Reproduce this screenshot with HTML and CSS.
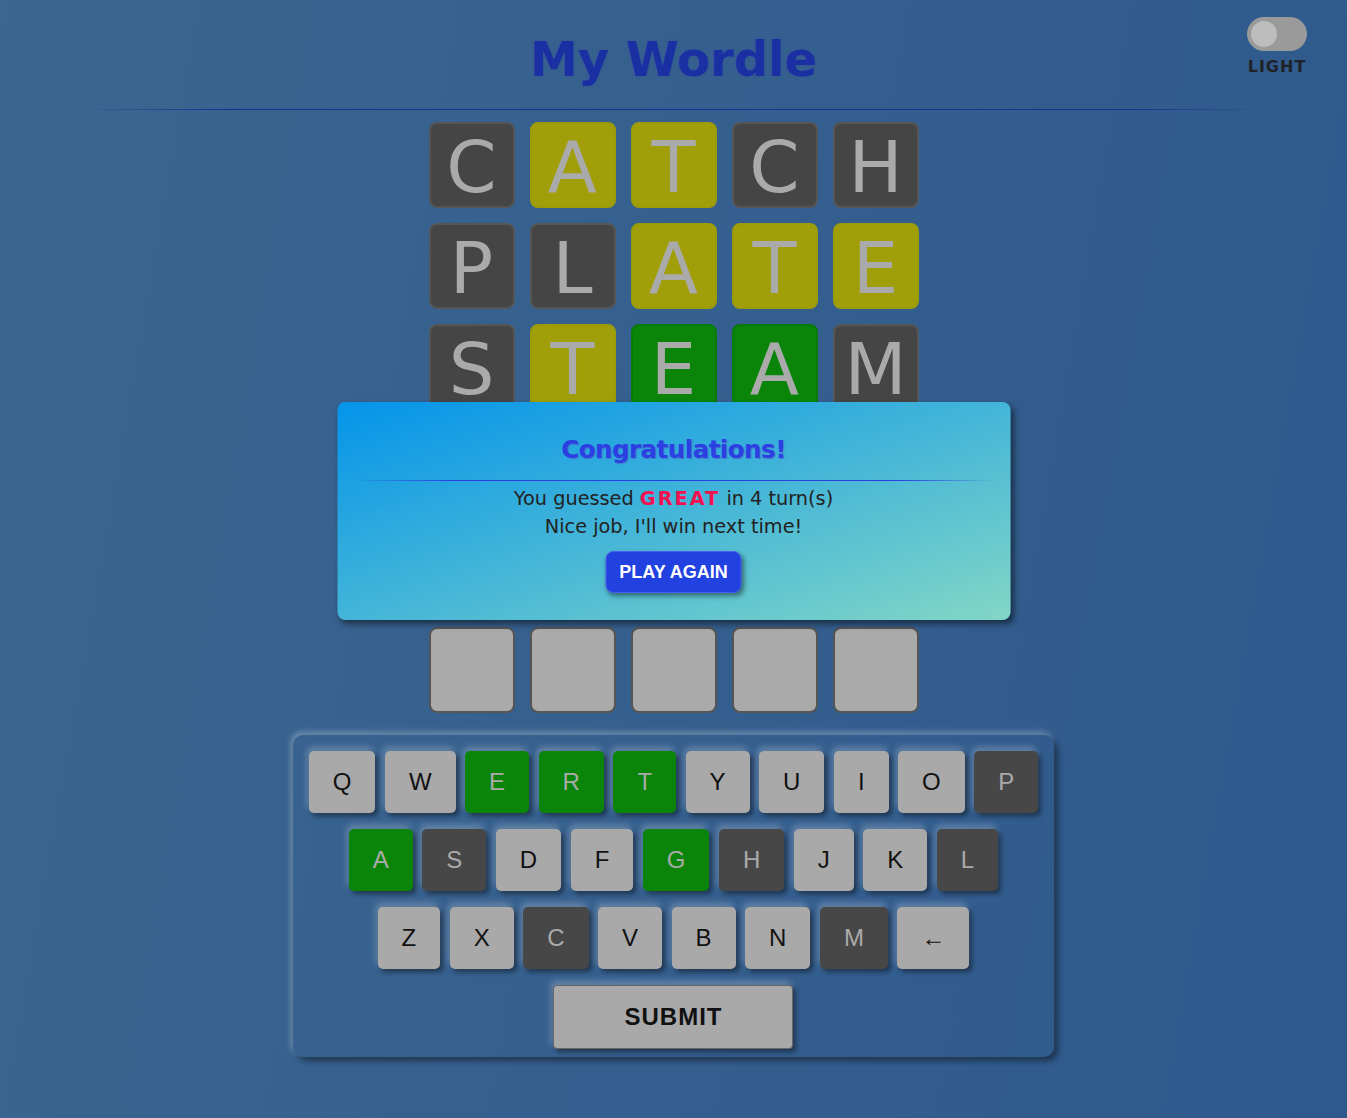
FILE: index.html
```html
<!DOCTYPE html>
<html lang="en">
<head>
<meta charset="utf-8">
<title>My Wordle</title>
<link rel="stylesheet" href="styles.css">
</head>
<body>
<header class="header">
  <h1 class="title">My Wordle</h1>
  <div class="theme">
    <div class="switch"><span class="knob"></span></div>
    <div class="theme-label">LIGHT</div>
  </div>
</header>
<div class="rule"></div>

<main class="board">
  <div class="tile dark">C</div><div class="tile yellow">A</div><div class="tile yellow">T</div><div class="tile dark">C</div><div class="tile dark">H</div>
  <div class="tile dark">P</div><div class="tile dark">L</div><div class="tile yellow">A</div><div class="tile yellow">T</div><div class="tile yellow">E</div>
  <div class="tile dark">S</div><div class="tile yellow">T</div><div class="tile green">E</div><div class="tile green">A</div><div class="tile dark">M</div>
  <div class="tile green"></div><div class="tile green"></div><div class="tile green"></div><div class="tile green"></div><div class="tile green"></div>
  <div class="tile empty"></div><div class="tile empty"></div><div class="tile empty"></div><div class="tile empty"></div><div class="tile empty"></div>
  <div class="tile empty"></div><div class="tile empty"></div><div class="tile empty"></div><div class="tile empty"></div><div class="tile empty"></div>
</main>

<section class="keyboard">
  <div class="krow">
    <button class="key">Q</button><button class="key">W</button><button class="key green">E</button><button class="key green">R</button><button class="key green">T</button><button class="key">Y</button><button class="key">U</button><button class="key">I</button><button class="key">O</button><button class="key dark">P</button>
  </div>
  <div class="krow">
    <button class="key green">A</button><button class="key dark">S</button><button class="key">D</button><button class="key">F</button><button class="key green">G</button><button class="key dark">H</button><button class="key">J</button><button class="key">K</button><button class="key dark">L</button>
  </div>
  <div class="krow">
    <button class="key">Z</button><button class="key">X</button><button class="key dark">C</button><button class="key">V</button><button class="key">B</button><button class="key">N</button><button class="key dark">M</button><button class="key">&larr;</button>
  </div>
  <div class="krow">
    <button class="submit">SUBMIT</button>
  </div>
</section>

<div class="modal">
  <h2 class="modal-title">Congratulations!</h2>
  <div class="modal-rule"></div>
  <p class="modal-text">You guessed <span class="answer">GREAT</span> in 4 turn(s)</p>
  <p class="modal-text">Nice job, I'll win next time!</p>
  <button class="play">PLAY AGAIN</button>
</div>
</body>
</html>
```

FILE: styles.css
```css
html, body {
  margin: 0;
  padding: 0;
}
body {
  min-height: 100vh;
  background: linear-gradient(100deg, #3b6690 0%, #355f8e 50%, #2e598d 100%);
  font-family: "DejaVu Sans", Verdana, sans-serif;
  position: relative;
}
.header {
  position: relative;
  display: flex;
  justify-content: center;
}
.title {
  margin: 0;
  padding-top: 31px;
  font-size: 48px;
  line-height: 56px;
  font-weight: bold;
  color: #1a2fa2;
  text-shadow: 0 0 2px rgba(60, 80, 180, 0.5);
}
.theme {
  position: absolute;
  top: 17px;
  right: 40px;
  display: flex;
  flex-direction: column;
  align-items: center;
}
.switch {
  width: 60px;
  height: 34px;
  border-radius: 17px;
  background: #9a9a9a;
  position: relative;
}
.knob {
  position: absolute;
  left: 4px;
  top: 4px;
  width: 26px;
  height: 26px;
  border-radius: 50%;
  background: #bdbdbd;
}
.theme-label {
  margin-top: 6px;
  font-size: 16px;
  line-height: 20px;
  font-weight: bold;
  letter-spacing: 1px;
  color: #1f2328;
}
.rule {
  margin: 22px auto 0;
  width: 1190px;
  height: 1px;
  background: linear-gradient(to right, rgba(26, 47, 140, 0), #1b318e 12%, #1b318e 88%, rgba(26, 47, 140, 0));
}
.board {
  margin: 12px auto 0;
  display: grid;
  grid-template-columns: repeat(5, 86px);
  grid-auto-rows: 86px;
  gap: 15px;
  justify-content: center;
}
.tile {
  box-sizing: border-box;
  border: 2px solid #555;
  border-radius: 8px;
  text-align: center;
  font-size: 72px;
  line-height: 77px;
  padding-top: 5px;
  color: #aaa;
}
.tile.dark { background: #454545; border-color: #555; }
.tile.yellow { background: #a09f0a; border-color: #9c9b0a; }
.tile.green { background: #0a850a; border-color: #0a7a0a; }
.tile.empty { background: #aaa; border-color: #555; }

.keyboard {
  width: max-content;
  margin: 22px auto 0;
  padding: 16px 16px 8px;
  border-radius: 10px;
  box-shadow: 4px 4px 6px rgba(0, 0, 0, 0.45), -2px -3px 6px rgba(255, 255, 255, 0.3);
  display: flex;
  flex-direction: column;
  gap: 16px;
}
.krow {
  display: flex;
  justify-content: center;
  gap: 9.5px;
}
.key {
  height: 62px;
  padding: 0 24px;
  border: none;
  border-radius: 5px;
  background: #a9a9a9;
  color: #111;
  font-family: "Liberation Sans", Arial, sans-serif;
  font-size: 24px;
  box-shadow: 3px 3px 5px rgba(0, 0, 0, 0.45), -2px -4px 7px rgba(255, 255, 255, 0.25);
}
.key.dark { background: #474747; color: #aaa; }
.key.green { background: #0a850a; color: #aaa; }
.submit {
  width: 240px;
  height: 64px;
  border: 1px solid #666;
  border-radius: 4px;
  background: #a9a9a9;
  color: #111;
  font-family: "Liberation Sans", Arial, sans-serif;
  font-size: 24px;
  font-weight: bold;
  letter-spacing: 1px;
  box-shadow: 3px 3px 5px rgba(0, 0, 0, 0.45), -2px -4px 7px rgba(255, 255, 255, 0.25);
}

.modal {
  position: absolute;
  top: 402px;
  left: 50%;
  transform: translateX(-50%);
  width: 673px;
  box-sizing: border-box;
  padding: 33px 0 27px;
  border-radius: 8px;
  background: linear-gradient(to bottom right, #0494ea, #82d6c6);
  box-shadow: 3px 4px 6px rgba(0, 0, 0, 0.5);
  display: flex;
  flex-direction: column;
  align-items: center;
  text-align: center;
}
.modal-title {
  margin: 0;
  font-size: 24.5px;
  letter-spacing: -0.5px;
  line-height: 30px;
  font-weight: bold;
  color: #2b3fe2;
  text-shadow: 1px 1px 1px rgba(90, 70, 200, 0.5);
}
.modal-rule {
  margin-top: 15px;
  width: 640px;
  height: 1px;
  background: linear-gradient(to right, rgba(40, 64, 224, 0), #2a40e0 15%, #2a40e0 85%, rgba(40, 64, 224, 0));
}
.modal-text {
  margin: 0;
  font-size: 19.3px;
  line-height: 28px;
  color: #222;
}
.modal-rule + .modal-text {
  margin-top: 4px;
}
.answer {
  font-weight: bold;
  color: #f5104f;
  letter-spacing: 2px;
}
.play {
  margin-top: 10px;
  height: 42px;
  padding: 0 12.5px;
  border: 1px solid #4a5ff0;
  border-radius: 8px;
  background: #2142e0;
  color: #fff;
  font-family: "Liberation Sans", Arial, sans-serif;
  font-size: 18px;
  font-weight: bold;
  box-shadow: 2px 3px 5px rgba(0, 0, 0, 0.45);
}
```
